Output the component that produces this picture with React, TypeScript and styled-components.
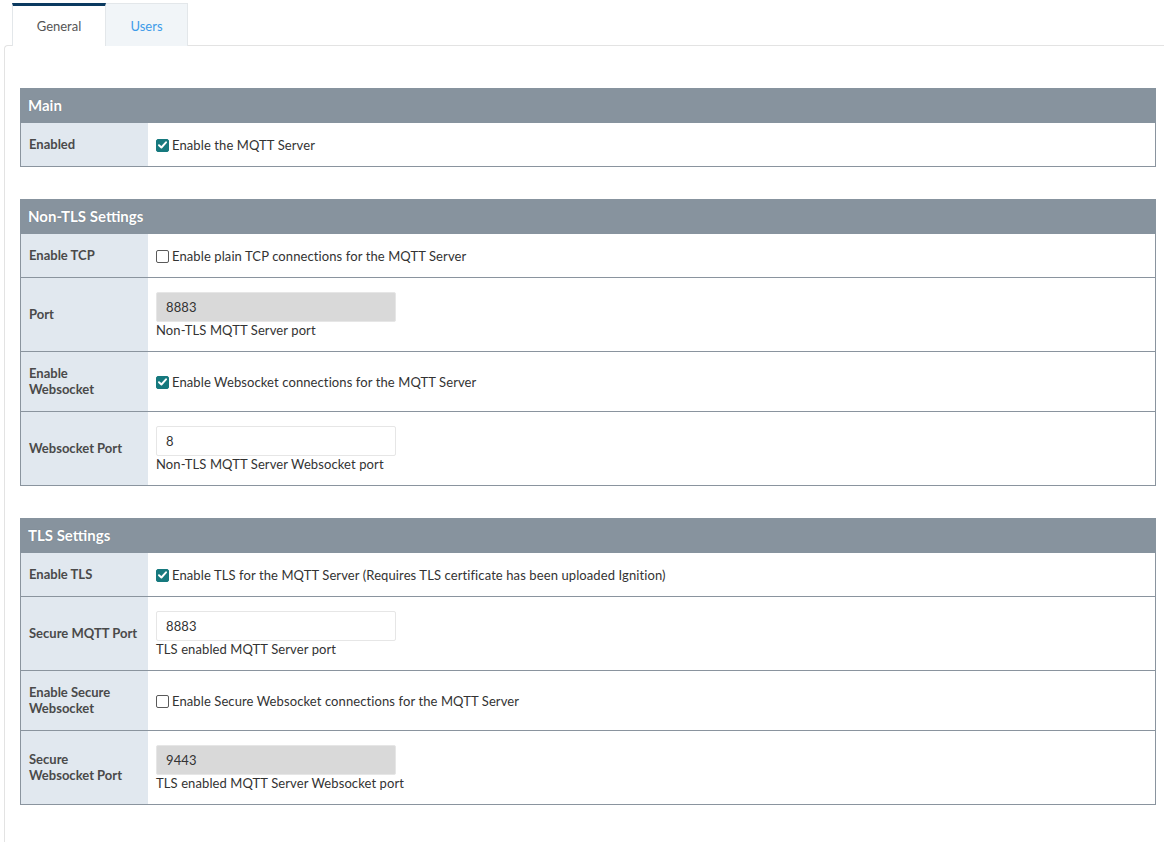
import React from "react";
import styled, { createGlobalStyle } from "styled-components";

const Global = createGlobalStyle`
  html, body { margin: 0; padding: 0; background: #ffffff; }
  body { font-family: "Lato", "Liberation Sans", sans-serif; font-size: 13px; color: #333333; }
  * { box-sizing: border-box; }
`;

const Page = styled.div`
  width: 1164px;
  min-height: 842px;
  padding-top: 3px;
`;

const TabBar = styled.div`
  display: flex;
  padding-left: 12px;
  height: 42px;
`;

const Tab = styled.div<{ $active?: boolean }>`
  display: flex;
  align-items: center;
  justify-content: center;
  width: ${(p) => (p.$active ? "94px" : "82px")};
  height: 43px;
  font-size: 13px;
  color: ${(p) => (p.$active ? "#555555" : "#3d9be9")};
  background: ${(p) => (p.$active ? "#ffffff" : "#f1f5f8")};
  border: 1px solid #e3e7ea;
  border-bottom: none;
  border-top: ${(p) => (p.$active ? "3px solid #0b3a60" : "1px solid #e3e7ea")};
  padding-top: ${(p) => (p.$active ? "0" : "2px")};
  position: relative;
  z-index: 1;
  & + & { border-left: none; }
`;

const Panel = styled.div`
  margin-left: 4px;
  border-top: 1px solid #e3e3e3;
  border-left: 1px solid #e3e3e3;
  border-top-left-radius: 4px;
  padding: 42px 8px 40px 15px;
  display: flex;
  flex-direction: column;
  gap: 32px;
`;

const Section = styled.div`
  border: 1px solid #8a949e;
  border-top: none;
`;

const SectionHeader = styled.div`
  height: 35px;
  background: #87939e;
  color: #ffffff;
  font-weight: 700;
  font-size: 15px;
  display: flex;
  align-items: center;
  padding-left: 8px;
  padding-bottom: 1px;
  margin: 0 -1px;
  text-shadow: 0 0 1px rgba(0, 0, 0, 0.25);
`;

const Row = styled.div`
  display: grid;
  grid-template-columns: 127px 1fr;
  & + & { border-top: 1px solid #8a949e; }
`;

const Label = styled.div`
  background: #e1e8ef;
  font-weight: 700;
  color: #4a4a4a;
  line-height: 16px;
  padding: 13px 8px 14px 8px;
  display: flex;
  align-items: center;
  white-space: nowrap;
`;

const Value = styled.div`
  padding: 14px 8px 13px 8px;
  line-height: 16px;
  letter-spacing: 0.1px;
  display: flex;
  flex-direction: column;
  justify-content: center;
  align-items: flex-start;
`;

const CheckLine = styled.label`
  display: flex;
  align-items: center;
  gap: 3px;
  color: #333333;
`;

const Box = styled.span<{ $checked?: boolean }>`
  width: 13px;
  height: 13px;
  border-radius: 2px;
  flex-shrink: 0;
  display: inline-flex;
  align-items: center;
  justify-content: center;
  background: ${(p) => (p.$checked ? "#16797e" : "#ffffff")};
  border: 1px solid ${(p) => (p.$checked ? "#16797e" : "#5a5a5a")};
`;

const TextInput = styled.div<{ $disabled?: boolean }>`
  width: 240px;
  height: 30px;
  border: 1px solid #e6e6e6;
  border-radius: 2px;
  background: ${(p) => (p.$disabled ? "#d9d9d9" : "#ffffff")};
  padding-left: 9px;
  display: flex;
  align-items: center;
  color: #333333;
`;

const Help = styled.div`
  color: #333333;
`;

function Check({ checked, text }: { checked?: boolean; text: string }) {
  return (
    <CheckLine>
      <Box $checked={checked}>
        {checked && (
          <svg width="9" height="8" viewBox="0 0 9 8">
            <path d="M1 4.2 L3.4 6.5 L8 1.3" stroke="#fff" strokeWidth="1.9" fill="none" strokeLinecap="round" strokeLinejoin="round" />
          </svg>
        )}
      </Box>
      <span>{text}</span>
    </CheckLine>
  );
}

function Field({ value, help, disabled }: { value: string; help: string; disabled?: boolean }) {
  return (
    <>
      <TextInput $disabled={disabled}>{value}</TextInput>
      <Help>{help}</Help>
    </>
  );
}

function LabelText({ lines }: { lines: string[] }) {
  return (
    <Label>
      <span>
        {lines.map((l, i) => (
          <React.Fragment key={i}>
            {i > 0 && <br />}
            {l}
          </React.Fragment>
        ))}
      </span>
    </Label>
  );
}

export default function App() {
  return (
    <Page>
      <Global />
      <TabBar>
        <Tab $active>General</Tab>
        <Tab>Users</Tab>
      </TabBar>
      <Panel>
        <Section>
          <SectionHeader>Main</SectionHeader>
          <Row>
            <LabelText lines={["Enabled"]} />
            <Value>
              <Check checked text="Enable the MQTT Server" />
            </Value>
          </Row>
        </Section>

        <Section>
          <SectionHeader>Non-TLS Settings</SectionHeader>
          <Row>
            <LabelText lines={["Enable TCP"]} />
            <Value>
              <Check text="Enable plain TCP connections for the MQTT Server" />
            </Value>
          </Row>
          <Row>
            <LabelText lines={["Port"]} />
            <Value>
              <Field value="8883" help="Non-TLS MQTT Server port" disabled />
            </Value>
          </Row>
          <Row>
            <LabelText lines={["Enable", "Websocket"]} />
            <Value>
              <Check checked text="Enable Websocket connections for the MQTT Server" />
            </Value>
          </Row>
          <Row>
            <LabelText lines={["Websocket Port"]} />
            <Value>
              <Field value="8" help="Non-TLS MQTT Server Websocket port" />
            </Value>
          </Row>
        </Section>

        <Section>
          <SectionHeader>TLS Settings</SectionHeader>
          <Row>
            <LabelText lines={["Enable TLS"]} />
            <Value>
              <Check checked text="Enable TLS for the MQTT Server (Requires TLS certificate has been uploaded Ignition)" />
            </Value>
          </Row>
          <Row>
            <LabelText lines={["Secure MQTT Port"]} />
            <Value>
              <Field value="8883" help="TLS enabled MQTT Server port" />
            </Value>
          </Row>
          <Row>
            <LabelText lines={["Enable Secure", "Websocket"]} />
            <Value>
              <Check text="Enable Secure Websocket connections for the MQTT Server" />
            </Value>
          </Row>
          <Row>
            <LabelText lines={["Secure", "Websocket Port"]} />
            <Value>
              <Field value="9443" help="TLS enabled MQTT Server Websocket port" disabled />
            </Value>
          </Row>
        </Section>
      </Panel>
    </Page>
  );
}
